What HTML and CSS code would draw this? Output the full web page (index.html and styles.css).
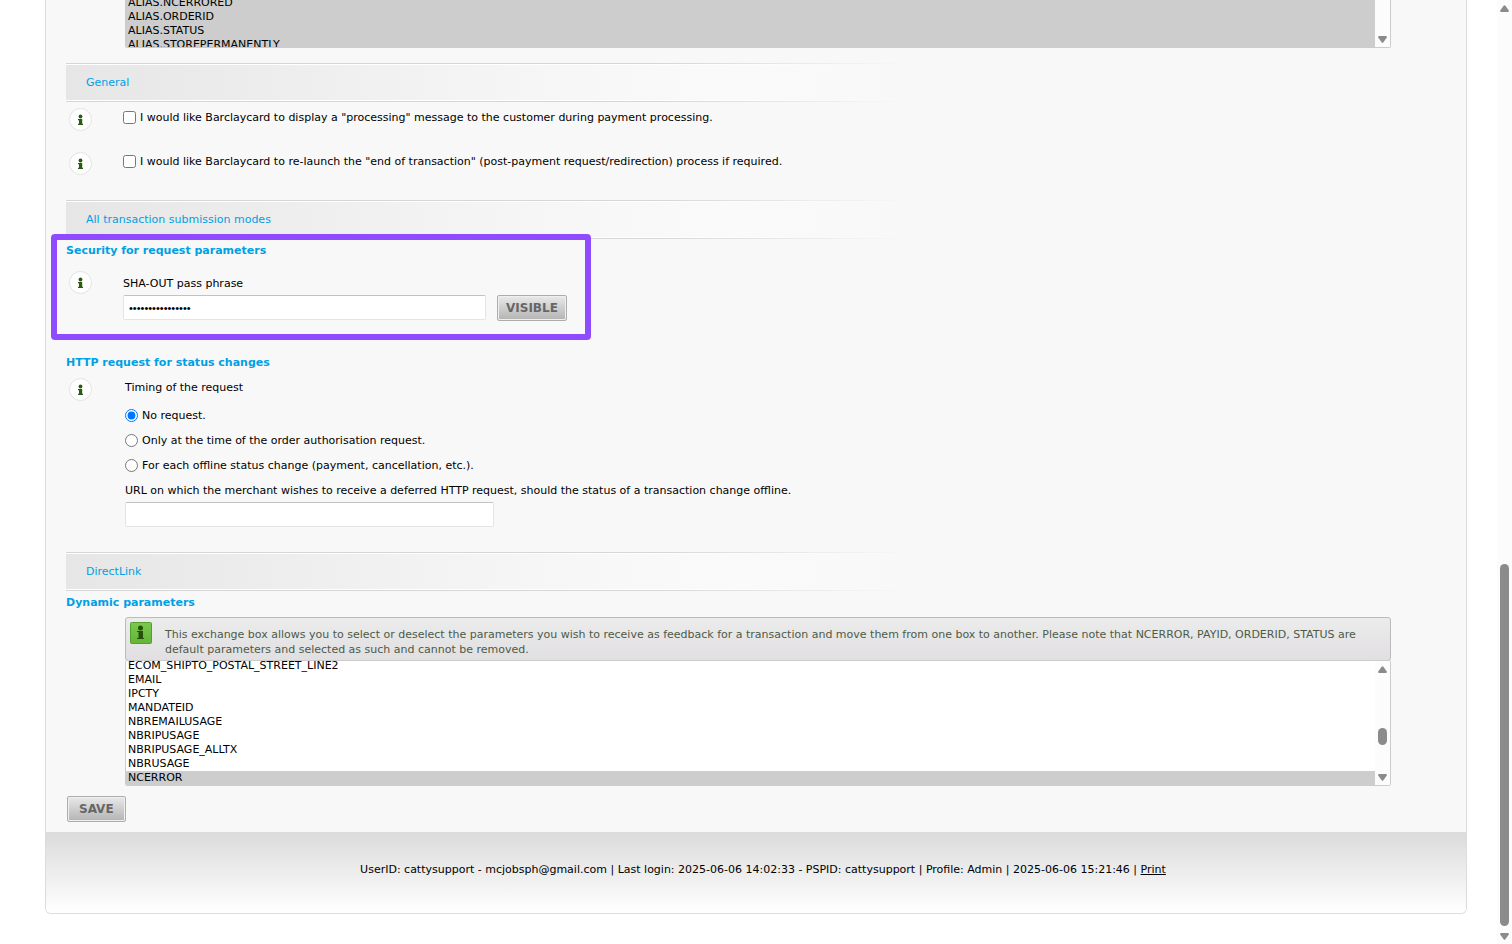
FILE: index.html
```html
<!DOCTYPE html>
<html lang="en">
	<head>
		<meta charset="UTF-8">
		<title>Technical information - Transaction feedback</title>
		<meta name="viewport" content="width=device-width,initial-scale=1" />
		<link rel="stylesheet" href="styles.css">
	</head>
	<body>
		<!-- icons used more than once -->
		<svg class="defs" width="0" height="0" aria-hidden="true">
			<symbol id="info" viewBox="0 0 23 23">
				<circle cx="11.5" cy="11.5" r="11" fill="#fff" stroke="#e2e2e2"/>
				<circle cx="11.5" cy="8.5" r="1.9" fill="#2d5a12"/>
				<path d="M9 11h4.200v4.800H14V17H9v-1.200h1V12.200H9z" fill="#2d5a12"/>
			</symbol>
			<symbol id="up" viewBox="0 0 9 7"><path d="M3.6.8Q4.5-.4 5.4.8L8.8 5.6Q9 7 8 7H1Q0 7 .2 5.6z" fill="#8b8b8b"/></symbol>
			<symbol id="down" viewBox="0 0 9 7"><path d="M3.6 6.2Q4.5 7.4 5.4 6.2L8.8 1.4Q9 0 8 0H1Q0 0 .2 1.4z" fill="#8b8b8b"/></symbol>
		</svg>

		<form class="box">
			<div class="content">
				<div class="list list-top">
					<select multiple size="4" aria-label="Selected e-Commerce parameters">
						<option class="picked">ALIAS.NCERRORED</option>
						<option class="picked">ALIAS.ORDERID</option>
						<option class="picked">ALIAS.STATUS</option>
						<option class="picked">ALIAS.STOREPERMANENTLY</option>
					</select>
					<div class="list-bar">
						<svg class="arrow"><use href="#down"/></svg>
					</div>
				</div>

				<h2 class="band">General</h2>
				<div class="row check-row">
					<svg class="info"><use href="#info"/></svg>
					<label class="choice"><input type="checkbox">I would like Barclaycard to display a "processing" message to the customer during payment processing.</label>
				</div>
				<div class="row check-row">
					<svg class="info"><use href="#info"/></svg>
					<label class="choice"><input type="checkbox">I would like Barclaycard to re-launch the "end of transaction" (post-payment request/redirection) process if required.</label>
				</div>

				<h2 class="band band-modes">All transaction submission modes</h2>
				<section class="security">
					<div class="highlight"></div>
					<h3>Security for request parameters</h3>
					<div class="row pass-row">
						<svg class="info"><use href="#info"/></svg>
						<div>
							<label class="line" for="sha">SHA-OUT pass phrase</label>
							<div class="field">
								<input class="text text-pass" type="password" id="sha" value="passphrase123456">
								<button class="btn" type="button">VISIBLE</button>
							</div>
						</div>
					</div>
				</section>

				<section class="http">
					<h3>HTTP request for status changes</h3>
					<div class="row wide-row">
						<svg class="info"><use href="#info"/></svg>
						<div>
							<p class="line timing">Timing of the request</p>
							<label class="choice radio"><input type="radio" name="timing" checked>No request.</label>
							<label class="choice radio"><input type="radio" name="timing">Only at the time of the order authorisation request.</label>
							<label class="choice radio"><input type="radio" name="timing">For each offline status change (payment, cancellation, etc.).</label>
							<label class="line url-label" for="url">URL on which the merchant wishes to receive a deferred HTTP request, should the status of a transaction change offline.</label>
							<input class="text text-url" type="text" id="url">
						</div>
					</div>
				</section>

				<h2 class="band">DirectLink</h2>
				<section>
					<h3>Dynamic parameters</h3>
					<div class="notice">
						<svg class="notice-icon" viewBox="0 0 22 22">
							<defs>
								<linearGradient id="green" x2="0" y2="1">
									<stop offset="0" stop-color="#7bc94f"/>
									<stop offset="1" stop-color="#62b536"/>
								</linearGradient>
							</defs>
							<rect x=".5" y=".5" width="21" height="21" rx="1" fill="url(#green)" stroke="#55a02c"/>
							<circle cx="10.5" cy="6" r="2.5" fill="#265009"/>
							<path d="M7 9h6v7h1v1H7v-1h1.5v-6H7z" fill="#265009"/>
						</svg>
						<p>This exchange box allows you to select or deselect the parameters you wish to receive as feedback for a transaction and move them from one box to another. Please note that NCERROR, PAYID, ORDERID, STATUS are default parameters and selected as such and cannot be removed.</p>
					</div>
					<div class="list list-dynamic">
						<select multiple size="9" aria-label="Dynamic parameters">
							<option>ECOM_SHIPTO_POSTAL_STREET_LINE2</option>
							<option>EMAIL</option>
							<option>IPCTY</option>
							<option>MANDATEID</option>
							<option>NBREMAILUSAGE</option>
							<option>NBRIPUSAGE</option>
							<option>NBRIPUSAGE_ALLTX</option>
							<option>NBRUSAGE</option>
							<option class="picked">NCERROR</option>
						</select>
						<div class="list-bar">
							<svg class="arrow"><use href="#up"/></svg>
							<div class="list-thumb"></div>
							<svg class="arrow"><use href="#down"/></svg>
						</div>
					</div>
				</section>
				<button class="btn btn-save" type="submit">SAVE</button>
			</div>
			<footer>UserID: cattysupport - mcjobsph@gmail.com | Last login: 2025-06-06 14:02:33 - PSPID: cattysupport | Profile: Admin | 2025-06-06 15:21:46 | <a href="#">Print</a></footer>
		</form>

		<div class="page-bar">
			<svg class="arrow"><use href="#up"/></svg>
			<div class="page-thumb"></div>
			<svg class="arrow"><use href="#down"/></svg>
		</div>
	</body>
</html>
```
FILE: styles.css
```css
*{
	margin: 0;
	padding: 0;
	box-sizing: border-box;
}
body{
	background: #fff;
	color: #000;
	font: 11px/14px Verdana, "DejaVu Sans", sans-serif;
	padding: 0 45px;
}
input,select,button{
	font: inherit;
}
svg{
	display: block;
}
.defs{
	position: absolute;
}
.box{
	border: 1px solid #dcdcdc;
	border-top: 0;
	border-radius: 0 0 6px 6px;
	overflow: hidden;
}
.content{
	background: #f8f8f8;
	padding: 0 20px 10px;
}

/* parameter lists */
.list{
	display: flex;
	margin: 0 55px 0 59px;
	border: 1px solid #ccc;
	border-radius: 2px;
	background: #fff;
	overflow: hidden;
}
.list select{
	flex: 1;
	min-width: 0;
	border: 0;
	outline: 0;
	border-radius: 0;
	background: #fff;
	color: #000;
	overflow: hidden;
	scrollbar-width: none;
}
.list option{
	height: 14px;
	min-height: 14px;
	line-height: 14px;
	padding: 0 2px;
}
.list .picked{
	background: #cdcdcd;
}
.list-top{
	height: 48px;
	border-top: 0;
	border-radius: 0 0 2px 2px;
}
.list-top select{
	height: 56px;
	margin-top: -4px;
}
.list-dynamic{
	height: 126px;
	align-items: flex-end;
	margin-top: -1px;
}
.list-dynamic select{
	height: 126px;
}
.list-bar{
	width: 15px;
	align-self: stretch;
	background: #fcfcfc;
	display: flex;
	flex-direction: column;
	align-items: center;
	justify-content: flex-end;
	padding: 5px 0 4px;
}
.list-thumb{
	width: 9px;
	height: 17px;
	border-radius: 5px;
	background: #8b8b8b;
	margin: auto 0 29px;
}
.arrow{
	width: 9px;
	height: 7px;
}

/* section headings */
.band{
	height: 39px;
	margin-top: 15px;
	padding-left: 20px;
	font-size: 11px;
	font-weight: normal;
	line-height: 40px;
	color: #00a0e4;
	background:
		linear-gradient(90deg, #d6d6d6 70%, #f8f8f8) 0 0/840px 1px no-repeat,
		linear-gradient(90deg, #fff 70%, #f8f8f8) 0 1px/840px 1px no-repeat,
		linear-gradient(90deg, #fff 70%, #f8f8f8) 0 37px/840px 1px no-repeat,
		linear-gradient(90deg, #d6d6d6 70%, #f8f8f8) 0 38px/840px 1px no-repeat,
		linear-gradient(90deg, #e6e6e6, #f3f3f3 45%, #f8f8f8 65%, #fafafa 80%, #f8f8f8) 0 0/840px 39px no-repeat;
}
.band-modes{
	margin-top: 10px;
}
h3{
	padding-top: 2px;
	font-size: 11px;
	line-height: 20px;
	color: #00a0e4;
}

.row{
	display: grid;
	grid-template-columns: 57px 1fr;
}
.wide-row{
	grid-template-columns: 59px 1fr;
}
.info{
	width: 23px;
	height: 23px;
	margin-left: 3px;
}
.line{
	display: block;
}
.choice{
	display: flex;
	gap: 4px;
}
.choice input{
	width: 13px;
	height: 13px;
}
.check-row{
	height: 44px;
	padding-top: 6px;
}
.check-row .choice{
	padding-top: 3px;
}
.security{
	position: relative;
	height: 112px;
}
/* frame drawn over the pass phrase block */
.highlight{
	position: absolute;
	left: -15px;
	top: -5px;
	width: 540px;
	height: 106px;
	border: 6px solid #8f4bff;
	border-radius: 4px;
}
.pass-row{
	padding-top: 10px;
}
.pass-row .line{
	padding: 6px 0 4px;
}
.field{
	display: flex;
	gap: 11px;
}
.text{
	display: block;
	width: 363px;
	height: 25px;
	padding: 0 5px;
	background: #fff;
	border: 1px solid #e4e4e4;
	border-top-color: #c2c2c2;
	border-radius: 2px;
}
.text-pass{
	font-family: "Liberation Sans", Arial, sans-serif;
}
.text-url{
	width: 369px;
}
.btn{
	height: 26px;
	padding: 0 8px;
	border: 1px solid #adadad;
	border-radius: 2px;
	box-shadow: inset 0 0 0 1px #efefef;
	background: linear-gradient(#e9e9e9, #b3b3b3);
	color: #666;
	font-size: 12px;
	font-weight: bold;
}
.btn-save{
	display: block;
	margin: 10px 0 0 1px;
	padding: 0 11px;
}
.wide-row{
	padding-top: 5px;
}
.timing{
	padding: 3px 0 14px;
}
.radio{
	height: 25px;
}
.http{
	height: 201px;
}
.url-label{
	padding-bottom: 4px;
}
.http + .band{
	margin-top: 0;
}

.notice{
	display: flex;
	align-items: flex-start;
	gap: 13px;
	height: 44px;
	margin: 4px 55px 0 59px;
	padding: 4px 20px 0 4px;
	border: 1px solid #bbb;
	border-radius: 3px;
	background: linear-gradient(#ececec, #e1dfe1);
	color: #4c5a48;
}
.notice-icon{
	flex: none;
	width: 22px;
	height: 22px;
}
.notice p{
	line-height: 15px;
	padding-top: 5px;
}

footer{
	height: 81px;
	padding: 31px 0 0 14px;
	text-align: center;
	background: linear-gradient(#dbdbdb, #fff);
}
footer a{
	color: #000;
}

/* page scrollbar */
.page-bar{
	position: fixed;
	top: 0;
	right: 0;
	bottom: 0;
	width: 15px;
	padding: 5px 0 4px;
	background: #fcfcfc;
	display: flex;
	flex-direction: column;
	align-items: center;
}
.page-thumb{
	width: 9px;
	height: 362px;
	border-radius: 5px;
	background: #8b8b8b;
	margin: auto 0 7px;
}
```
